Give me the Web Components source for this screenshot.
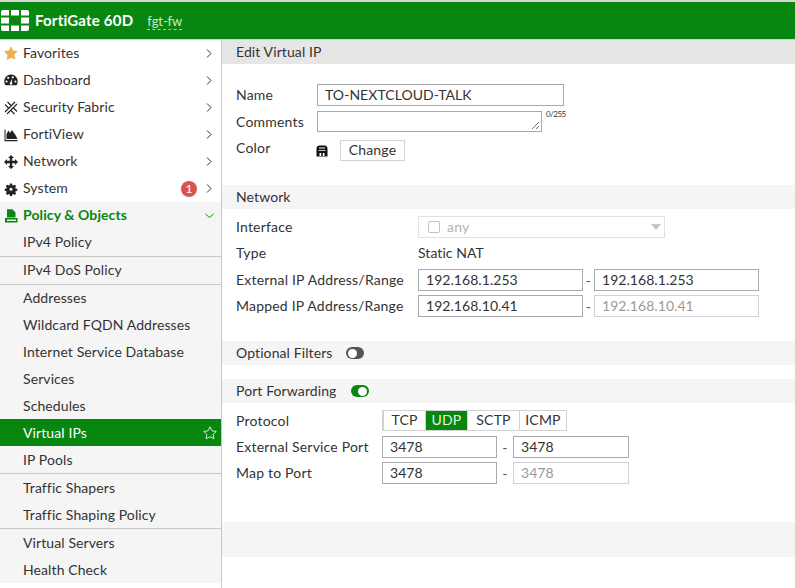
<!DOCTYPE html>
<html>
<head>
<meta charset="utf-8">
<title>Edit Virtual IP</title>
<style>
  html, body { margin: 0; padding: 0; background: #fff; height: 100%; overflow: hidden; }
  body { font: 14px Lato, "Liberation Sans", sans-serif; color: #333; letter-spacing: .2px; }
  fg-app { height: 588px; }
</style>
</head>
<body>
<fg-app>
  <fg-header slot="header" model="FortiGate 60D" host="fgt-fw"></fg-header>
  <fg-sidebar slot="nav">
    <fg-nav-item icon="star" arrow="right">Favorites</fg-nav-item>
    <fg-nav-item icon="dash" arrow="right">Dashboard</fg-nav-item>
    <fg-nav-item icon="fabric" arrow="right">Security Fabric</fg-nav-item>
    <fg-nav-item icon="view" arrow="right">FortiView</fg-nav-item>
    <fg-nav-item icon="net" arrow="right">Network</fg-nav-item>
    <fg-nav-item icon="gear" arrow="right" badge="1">System</fg-nav-item>
    <fg-nav-item icon="policy" arrow="down" open>Policy &amp; Objects</fg-nav-item>
    <fg-nav-item sub sep>IPv4 Policy</fg-nav-item>
    <fg-nav-item sub sep>IPv4 DoS Policy</fg-nav-item>
    <fg-nav-item sub tight>Addresses</fg-nav-item>
    <fg-nav-item sub low>Wildcard FQDN Addresses</fg-nav-item>
    <fg-nav-item sub low>Internet Service Database</fg-nav-item>
    <fg-nav-item sub low>Services</fg-nav-item>
    <fg-nav-item sub low>Schedules</fg-nav-item>
    <fg-nav-item sub low active>Virtual IPs</fg-nav-item>
    <fg-nav-item sub low sep>IP Pools</fg-nav-item>
    <fg-nav-item sub low>Traffic Shapers</fg-nav-item>
    <fg-nav-item sub low sep>Traffic Shaping Policy</fg-nav-item>
    <fg-nav-item sub low>Virtual Servers</fg-nav-item>
    <fg-nav-item sub low>Health Check</fg-nav-item>
  </fg-sidebar>
  <fg-form slot="main"></fg-form>
</fg-app>

<script>
// small helper, every element gets an open shadow root from a string
function shadow(el, html) {
  el.attachShadow({ mode: 'open' }).innerHTML = html;
}

const ICONS = {
  star: '<path fill="#f0ad4e" d="M7 0l2 4.500 5 .6-3.600 3.200 1 5L7 11.800l-4.400 2.500 1-5L0 5.100l5-.6z" transform="translate(0 -1)"/>',
  dash: '<path fill="#222" fill-rule="evenodd" transform="translate(0 -1)" d="M7 1.500C3.200 1.500.3 4.600.3 8.400c0 1.400.4 2.700 1.100 3.800h11.200c.7-1.100 1.100-2.400 1.100-3.800 0-3.800-2.900-6.900-6.700-6.900zM4.200 3.700a1.100 1.100 0 110 2.200 1.100 1.100 0 010-2.200zM8.800 3.200a1.100 1.100 0 110 2.200 1.100 1.100 0 010-2.200zM2.600 7.400a1.100 1.100 0 110 2.200 1.100 1.100 0 010-2.200zM11.400 7.400a1.100 1.100 0 110 2.200 1.100 1.100 0 010-2.200zM7.600 6.400l.6.3-.4 2.700a1.300 1.300 0 11-1.300-.2z"/>',
  fabric: '<path fill="none" stroke="#222" stroke-width="1.100" d="M1 3.500l3.500 3.500M3.500 1L7 4.500M7 9.500l3.500 3.500M9.500 7l3.500 3.500M1 11L11 1M3 13L13 3"/>',
  view: '<path fill="#222" d="M.5 1.500h1v10.500h12v1.200H.5zM2.500 11V6l2-3.500L6 5l2-3 2 3 1.500 2 2 4z"/>',
  net: '<path fill="#222" d="M7 0l3 3H8.200v2.800H11V4l3 3-3 3V8.200H8.200V11H10l-3 3-3-3h1.800V8.200H3V10L0 7l3-3v1.800h2.800V3H4z"/>',
  gear: '<g transform="translate(1 1) scale(.857)"><path fill="#222" fill-rule="evenodd" d="M5.800.6h2.400l.4 1.900 1.100.5 1.600-1.100 1.700 1.700-1.100 1.600.5 1.100 1.900.4v2.400l-1.900.4-.5 1.100 1.100 1.600-1.700 1.700-1.600-1.100-1.100.5-.4 1.900H5.800l-.4-1.900-1.100-.5-1.600 1.100-1.700-1.700 1.100-1.600-.5-1.100-1.900-.4V6.700l1.900-.4.5-1.100L1 3.600l1.700-1.700 1.600 1.100 1.100-.5zM7 5.400a1.800 1.800 0 100 3.600 1.800 1.800 0 000-3.600z"/></g>',
  policy: '<path fill="#07870f" d="M3 .3h5.500L11.500 3.500v5H3zM1 9h2v3h9V9h1.500v4.500H1z"/><rect x="3" y="9" width="9" height="1.500" fill="#07870f"/>'
};

class FgApp extends HTMLElement {
  constructor() {
    super();
    shadow(this, `
      <style>
        :host { display: grid; grid-template-columns: 222px 1fr; grid-template-rows: 40px 1fr; width: 795px; }
        ::slotted([slot=header]) { grid-column: 1 / 3; }
      </style>
      <slot name="header"></slot><slot name="nav"></slot><slot name="main"></slot>`);
  }
}

class FgHeader extends HTMLElement {
  connectedCallback() {
    shadow(this, `
      <style>
        :host { display: flex; align-items: center; box-sizing: border-box; height: 40px; border-top: 2px solid #d8d8d8; border-bottom: 1px solid #bcdcbe; background: #07870f; color: #fff; padding-left: 1px; }
        svg { display: block; margin-right: 6px; }
        b { font-size: 15px; font-weight: 700; letter-spacing: .2px; margin-right: 14px; padding-bottom: 2px; }
        span { font-size: 13px; letter-spacing: -.1px; color: #cfe7d0; border-bottom: 1px dashed #a9cfab; line-height: 16px; margin-top: 2px; }
      </style>
      <svg width="28" height="21" viewBox="0 0 28 21" fill="#fff">
        <path d="M2 0h6v5.500H0V2a2 2 0 012-2zM10 0h8v5.500h-8zM20 0h6a2 2 0 012 2v3.500h-8zM0 7.500h8v6H0zM20 7.500h8v6h-8zM0 15.500h8V21H2a2 2 0 01-2-2zM10 15.500h8V21h-8zM20 15.500h8V19a2 2 0 01-2 2h-6z"/>
      </svg>
      <b>${this.getAttribute('model')}</b><span>${this.getAttribute('host')}</span>`);
  }
}

class FgSidebar extends HTMLElement {
  constructor() {
    super();
    shadow(this, `
      <style>
        :host { display: block; box-sizing: border-box; width: 222px; height: 548px; border-right: 1px solid #c8c8c8; letter-spacing: .1px; }
      </style>
      <slot></slot>`);
  }
}

class FgNavItem extends HTMLElement {
  connectedCallback() {
    const icon = this.getAttribute('icon');
    const arrow = this.getAttribute('arrow');
    const badge = this.getAttribute('badge');
    const active = this.hasAttribute('active');
    shadow(this, `
      <style>
        :host { display: flex; align-items: center; height: 27px; padding-left: 4px; color: #333; }
        :host([sub]) { background: #f5f5f5; padding-left: 23px; }
        :host([tight]) { height: 26px; }
        :host([open]) { background: #f5f5f5; color: #07870f; font-weight: 700; }
        :host([sep]) { border-bottom: 1px solid #c8c8c8; }
        :host([active]) { background: #07870f; color: #fff; }
        svg.i { width: 14px; height: 14px; margin-right: 5px; flex: none; }
        .t { flex: 1; white-space: nowrap; padding-bottom: 2px; }
        :host([low]) .t { padding-bottom: 0; }
        .b { width: 16px; height: 16px; border-radius: 50%; background: #d9534f; color: #fff; font-size: 12px; font-weight: 400; line-height: 16px; text-align: center; margin-right: 8px; }
        svg.a { width: 9px; height: 11px; margin-right: 7px; flex: none; }
        svg.s { width: 14px; height: 14px; margin-right: 4px; }
      </style>
      ${icon ? `<svg class="i" viewBox="0 0 14 14">${ICONS[icon]}</svg>` : ''}
      <span class="t"><slot></slot></span>
      ${badge ? `<span class="b">${badge}</span>` : ''}
      ${arrow === 'right' ? '<svg class="a" viewBox="0 0 9 11"><path d="M2 1.500l4 4-4 4" fill="none" stroke="#333" stroke-width="1"/></svg>' : ''}
      ${arrow === 'down' ? '<svg class="a" viewBox="0 0 9 11"><path d="M.5 4l4 3.500 4-3.500" fill="none" stroke="#07870f" stroke-width="1"/></svg>' : ''}
      ${active ? '<svg class="s" viewBox="0 0 14 14"><path d="M7 .8l1.900 4 4.400.6-3.200 3 .8 4.400L7 10.700l-3.900 2.100.8-4.400-3.200-3 4.400-.6z" fill="none" stroke="#d5ecd6" stroke-width="1"/></svg>' : ''}`);
  }
}

class FgSection extends HTMLElement {
  constructor() {
    super();
    shadow(this, `
      <style>
        :host { display: flex; align-items: center; height: 24px; padding-left: 14px; background: #f5f5f5; color: #333; letter-spacing: .1px; }
        :host([strong]) { background: #e6e6e6; }
        span { padding-bottom: 2px; }
        ::slotted(fg-toggle) { margin-left: 14px; }
      </style>
      <span><slot></slot></span><slot name="end"></slot>`);
  }
}

class FgRow extends HTMLElement {
  connectedCallback() {
    const w = this.getAttribute('label-width') || '182';
    shadow(this, `
      <style>
        :host { display: flex; align-items: center; padding-left: 14px; }
        .l { width: ${w}px; flex: none; white-space: nowrap; color: #333; padding-bottom: var(--label-lift, 2px); }
        .c { display: flex; align-items: center; white-space: nowrap; }
      </style>
      <span class="l">${this.getAttribute('label')}</span><div class="c"><slot></slot></div>`);
  }
}

class FgInput extends HTMLElement {
  connectedCallback() {
    shadow(this, `
      <style>
        :host { display: block; box-sizing: border-box; height: 22px; line-height: 19px; border: 1px solid #a9a9a9; padding-left: 7px; color: #333; white-space: nowrap; letter-spacing: .05px; }
        :host([disabled]) { border-color: #d2d2d2; color: #9a9a9a; }
      </style>
      <slot></slot>`);
    this.style.width = this.getAttribute('w') + 'px';
  }
}

class FgToggle extends HTMLElement {
  connectedCallback() {
    shadow(this, `
      <style>
        :host { display: block; width: 18px; height: 12px; border-radius: 6px; background: #555; position: relative; }
        :host([on]) { background: #07870f; }
        i { position: absolute; top: 1.500px; left: 1.500px; width: 9px; height: 9px; border-radius: 50%; background: #fff; }
        :host([on]) i { left: auto; right: 1.500px; }
      </style>
      <i></i>`);
  }
}

class FgSegments extends HTMLElement {
  connectedCallback() {
    const sel = this.getAttribute('selected');
    const parts = this.getAttribute('items').split(',').map(s =>
      `<span class="${s === sel ? 'on' : ''}">${s}</span>`).join('');
    shadow(this, `
      <style>
        :host { display: grid; grid-template-columns: 42px 42px 52px 47px; height: 21px; width: 185px; box-sizing: border-box; border: 1px solid #d2d2d2; line-height: 18px; color: #333; }
        span { text-align: center; border-left: 1px solid #d2d2d2; }
        span:first-child { border-left: 0; }
        .on { background: #07870f; color: #e4f3e5; }
      </style>
      ${parts}`);
  }
}

class FgForm extends HTMLElement {
  connectedCallback() {
    shadow(this, `
      <style>
        :host { display: block; height: 548px; }
        .dash { width: 11px; text-align: center; color: #555; }
        .dash2 { width: 16px; text-align: center; color: #555; }
        .ta { position: relative; box-sizing: border-box; width: 225px; height: 21px; border: 1px solid #a9a9a9; }
        .ta svg { position: absolute; right: 1px; bottom: 1px; }
        .cnt { font-size: 8px; letter-spacing: -.5px; align-self: flex-start; margin: -2px 0 0 4px; color: #333; }
        .btn { box-sizing: border-box; width: 65px; height: 21px; line-height: 18px; text-align: center; border: 1px solid #d2d2d2; margin-left: 12px; }
        .sel { box-sizing: border-box; width: 247px; height: 22px; border: 1px solid #e2e2e2; display: flex; align-items: center; padding: 0 3px 0 9px; color: #b4b4b4; }
        .sel i { width: 10px; height: 10px; border: 1px solid #c0c0c0; border-radius: 2px; margin-right: 7px; }
        .sel span { flex: 1; padding-bottom: 2px; }
        .sel b { border: 5.500px solid transparent; border-top: 6px solid #c4c4c4; border-bottom: 0; }
        .top { margin-top: 20px; }
        .foot { height: 35px; margin-top: 38px; background: #f5f5f5; }
        .type { padding-bottom: 2px; letter-spacing: .05px; }
        .swatch { margin-left: -1px; }
      </style>
      <fg-section strong>Edit Virtual IP</fg-section>

      <fg-row class="top" label="Name" label-width="81" style="height:22px"><fg-input w="247">TO-NEXTCLOUD-TALK</fg-input></fg-row>
      <fg-row label="Comments" label-width="81" style="height:21px;margin-top:5px;--label-lift:0px">
        <div class="ta"><svg width="10" height="10"><path d="M2 9l7-7M6 9l3-3" stroke="#777" fill="none"/></svg></div><span class="cnt">0/255</span>
      </fg-row>
      <fg-row label="Color" label-width="81" style="height:21px;margin-top:8px;--label-lift:6px">
        <svg class="swatch" width="12" height="12" viewBox="0 0 12 12"><path fill="#111" fill-rule="evenodd" d="M3.500.5h5C10.500.5 11.500 2 11.500 4v7.500H.5V4C.5 2 1.500.5 3.500.5zM3 2.500v1h6v-1zM2.500 5v.8h7V5zM3.500 8v3h1.700V8zM6.800 8v3h1.700V8z"/></svg>
        <div class="btn">Change</div>
      </fg-row>

      <fg-section style="margin-top:24px">Network</fg-section>
      <fg-row label="Interface" style="margin-top:7px;height:22px"><div class="sel"><i></i><span>any</span><b></b></div></fg-row>
      <fg-row label="Type" style="margin-top:5px;height:20px"><span class="type">Static NAT</span></fg-row>
      <fg-row label="External IP Address/Range" style="margin-top:6px;height:22px">
        <fg-input w="165">192.168.1.253</fg-input><span class="dash">-</span><fg-input w="165">192.168.1.253</fg-input>
      </fg-row>
      <fg-row label="Mapped IP Address/Range" style="margin-top:4px;height:22px">
        <fg-input w="165">192.168.10.41</fg-input><span class="dash">-</span><fg-input w="165" disabled>192.168.10.41</fg-input>
      </fg-row>

      <fg-section style="margin-top:24px">Optional Filters<fg-toggle slot="end"></fg-toggle></fg-section>
      <fg-section style="margin-top:14px">Port Forwarding<fg-toggle slot="end" on></fg-toggle></fg-section>
      <fg-row label="Protocol" label-width="146" style="margin-top:7px;height:21px;--label-lift:0px"><fg-segments items="TCP,UDP,SCTP,ICMP" selected="UDP"></fg-segments></fg-row>
      <fg-row label="External Service Port" label-width="146" style="margin-top:5px;height:22px">
        <fg-input w="115">3478</fg-input><span class="dash2">-</span><fg-input w="116">3478</fg-input>
      </fg-row>
      <fg-row label="Map to Port" label-width="146" style="margin-top:4px;height:22px">
        <fg-input w="115">3478</fg-input><span class="dash2">-</span><fg-input w="116" disabled>3478</fg-input>
      </fg-row>
      <div class="foot"></div>`);
  }
}

customElements.define('fg-app', FgApp);
customElements.define('fg-header', FgHeader);
customElements.define('fg-sidebar', FgSidebar);
customElements.define('fg-nav-item', FgNavItem);
customElements.define('fg-section', FgSection);
customElements.define('fg-row', FgRow);
customElements.define('fg-input', FgInput);
customElements.define('fg-toggle', FgToggle);
customElements.define('fg-segments', FgSegments);
customElements.define('fg-form', FgForm);
</script>
</body>
</html>
